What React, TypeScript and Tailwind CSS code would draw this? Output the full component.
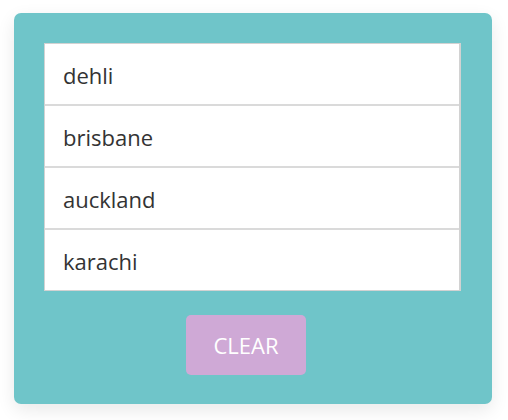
import React from "react";

const cities = ["dehli", "brisbane", "auckland", "karachi"];

export default function App() {
  return (
    <div className="min-h-[420px] w-[508px] bg-white pt-[13px] pl-[14px]" style={{ fontFamily: '"Open Sans", "Noto Sans", sans-serif' }}>
      <div className="w-[478px] rounded-[7px] bg-[#6fc5c9] pl-[30px] pt-[30px] pb-[29px] shadow-[0_6px_18px_rgba(0,0,0,0.09)]">
        <ul className="w-[417px] border-t border-l border-b border-r-2 border-[#d2d2d2] flex flex-col gap-[2px] bg-[#dadada]">
          {cities.map((c) => (
            <li key={c} className="h-[60px] bg-white flex items-center pl-[18px] pt-[3px] text-[22px] text-[#333]">
              {c}
            </li>
          ))}
        </ul>
        <button className="mt-[24px] ml-[142px] w-[120px] h-[60px] rounded-[5px] bg-[#cfa9d6] text-white text-[22px] flex items-center justify-center pt-[1px]">
          CLEAR
        </button>
      </div>
    </div>
  );
}
